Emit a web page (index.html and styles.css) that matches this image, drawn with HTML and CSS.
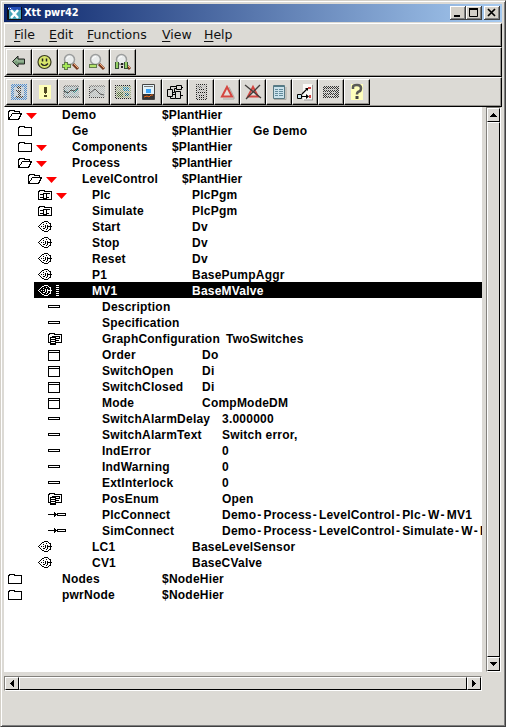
FILE: index.html
```html
<!DOCTYPE html>
<html lang="en">
<head>
<meta charset="utf-8">
<title>Xtt pwr42</title>
<link rel="stylesheet" href="styles.css">
</head>
<body>
<svg class="defs" width="0" height="0">
  <defs>
    <pattern id="check" width="2" height="2" patternUnits="userSpaceOnUse"><path d="M0 0h1v1h-1zM1 1h1v1h-1z" fill="#dcdad5"/></pattern>
    <symbol id="folder" viewBox="0 0 16 16"><path d="M.5 13.500V5.500L2.500 4.500H5.500L7.500 5.500H13.500V13.500Z"/></symbol>
    <symbol id="open" viewBox="0 0 16 16"><path d="M.5 13.500V5.500L2.500 4.500H5.500L7.500 5.500H11.500V7.500M.5 13.500L4.500 7.500H13.500L10.500 13.500Z"/></symbol>
    <symbol id="plc" viewBox="0 0 16 16"><path d="M.5 13.500V5.500L2.500 4.500H5.500L7.500 5.500H13.500V13.500ZM2 8.500H5M2 11.500H5M5.500 7.500H8.500V12.500H5.500ZM8 7.500H12M8 11.500H11"/></symbol>
    <symbol id="obj" viewBox="0 0 16 16"><path d="M.5 8.500L4.500 4.500L7 3.500H9.500L12.500 6V11L9.500 13.500H7L4.500 12.500L.5 8.500M12 8.500H14"/><path d="M3 8.500H12M5.500 6L8 8.500L5.500 11M8 5.500L11 8.500L8 11.500" stroke-dasharray="1 1"/></symbol>
    <symbol id="attr" viewBox="0 0 16 16"><path d="M.5 7.500H11.500V9.500H.5Z"/></symbol>
    <symbol id="box" viewBox="0 0 16 16"><path d="M.5 4.500H11.500V14.500H.5ZM0 6.500H12"/></symbol>
    <symbol id="enum" viewBox="0 0 16 16"><path d="M.5 12.500V4.500L2.500 3.500H5.500L7.500 4.500H13.500V12.500Z"/><path d="M4.500 6.500H11.500V8.500H4.500ZM8 10.500H11"/><path d="M2.500 7.500H7.500V14.500H2.500Z" fill="#fff"/><path d="M3 9.500H7M3 11.500H7M3 13.500H7"/></symbol>
    <symbol id="conn" viewBox="0 0 18 16"><path d="M0 8.500H9M6.500 6V11M7.500 7V10M9.500 7.500H17.500V9.500H9.500Z"/></symbol>
    <symbol id="lens" viewBox="0 0 24 24"><path d="M14 14L19 19" stroke="#763a20" stroke-width="3"/><path d="M15 14L19 18" stroke="#f4ad7e"/><circle cx="10.500" cy="9.500" r="5" fill="#e9ecec" stroke="#9b9d9d" stroke-width="1.500"/><path d="M7.500 9Q8 6.500 11 6.500" stroke="#fff" fill="none"/></symbol>
  </defs>
</svg>
<div class="window">
  <header class="titlebar">
    <svg class="logo" width="15" height="13"><path fill="#111" d="M0 0h15v13H0z"/><path fill="#2550b8" d="M1 0h13v3H1z"/><path fill="#45a4b8" d="M2 3h12v9H2z"/><path d="M4 3L11 11M11 3L4 11" stroke="#fff" stroke-width="2.500"/><path fill="#fff" d="M1 1h1v1H1zM3 1h1v1H3z"/></svg>
    <h1>Xtt pwr42</h1>
    <div class="controls">
      <button aria-label="Minimize"><svg width="14" height="12"><path fill="#000" d="M3 8h6v2H3z"/></svg></button>
      <button aria-label="Maximize"><svg width="14" height="12"><path d="M2.500 2v7.500h8V2" fill="none" stroke="#000"/><path d="M2 1h9v2H2z"/></svg></button>
      <button class="close" aria-label="Close"><svg width="14" height="12"><path d="M3 2L10 9M10 2L3 9" stroke="#000" stroke-width="1.700"/></svg></button>
    </div>
  </header>
  <nav class="menubar"><span class="m1"><u>F</u>ile</span><span class="m2"><u>E</u>dit</span><span class="m3"><u>F</u>unctions</span><span class="m4"><u>V</u>iew</span><span><u>H</u>elp</span></nav>
  <div class="toolbar">
    <button><svg viewBox="0 0 24 24"><path d="M5.500 11.500L11 6V9H17.500V14H11V17Z" fill="#789c79" stroke="#222"/><path d="M7 11.500L10 9v2h7" fill="none" stroke="#abc3aa"/></svg></button>
    <button><svg viewBox="0 0 24 24"><circle cx="11.500" cy="12" r="6.500" fill="#d8e66c" stroke="#383b20" stroke-width="1.200"/><path d="M9.500 8.500v3M13.500 8.500v3" stroke="#222" stroke-width="1.500"/><path d="M8 13.500Q11.500 17.500 15 13.500" fill="none" stroke="#222" stroke-width="1.200"/></svg></button>
    <button><svg viewBox="0 0 24 24"><use href="#lens"/><path d="M5 12h4v2h3v4H9v2H5v-2H3v-4h2z" fill="#617d4a"/><path d="M6 13h2v2h3v2H8v2H6v-2H4v-2h2z" fill="#a5e857"/></svg></button>
    <button><svg viewBox="0 0 24 24"><use href="#lens"/><path d="M4 14h8v4H4z" fill="#617d4a"/><path d="M5 15h6v2H5z" fill="#b3e26c"/></svg></button>
    <button><svg viewBox="0 0 24 24"><use href="#lens"/><path d="M4 12h4v7H4zM13 12h4v7h-4z" fill="#385134"/><path d="M5 12h2v6H5zM14 12h2v6h-2z" fill="#94cf65"/><path d="M10 13h2v2h-2zM10 16h2v2h-2z" fill="#222"/></svg></button>
  </div>
  <div class="toolbar">
    <button><svg viewBox="0 0 24 24"><path d="M4 4h16v16H4z" fill="#4c8dd3"/><path d="M7 7h10v10H7z" fill="#bed0e1"/><path d="M10 6h4v3h-4zM9 10h5v6h2v2H9v-2h2v-4H9z" fill="#444"/><path d="M4 4h16v16H4z" fill="url(#check)"/></svg></button>
    <button><svg viewBox="0 0 24 24"><path d="M6 5h12v14H6z" fill="#ffffb9"/><path d="M11 7h3v6h-1v1h-1v-1h-1zM11 15h3v2h-3z" fill="#514a23"/></svg></button>
    <button><svg viewBox="0 0 24 24"><path d="M5 6h15v12H5z" fill="#a4bac2"/><path d="M5 10l4 3 3-3 3 2 4-3" fill="none" stroke="#188" stroke-width="1.500"/><path d="M5 18V6h15M5 17h15v1" fill="none" stroke="#444"/><path d="M4 5h17v14H4z" fill="url(#check)"/><path d="M5 11l4 2 3-3 3 1 4-3" fill="none" stroke="#444"/></svg></button>
    <button><svg viewBox="0 0 24 24"><path d="M4 6h16v12H4z" fill="#bac2c3"/><path d="M4.500 18V6H20M4 17.500h16" fill="none" stroke="#444"/><path d="M4 5h17v14H4z" fill="url(#check)"/><path d="M5 13l5-4 5 5 4 1" fill="none" stroke="#555"/></svg></button>
    <button><svg viewBox="0 0 24 24"><path d="M4 5h16v14H4z" fill="#9dac86"/><path d="M4 5.500h16M4.500 5v13M4 18.500h16" stroke="#222"/><path d="M12 7h6v4h-6z" fill="#288eb0"/><path d="M6 12h6v5H6z" fill="#526f35"/><path d="M14 13h4v3h-4z" fill="#167"/><path d="M4 5h16v14H4z" fill="url(#check)"/></svg></button>
    <button><svg viewBox="0 0 24 24"><path d="M5.500 4.500h12v15h-12z" fill="#e3f3fa" stroke="#444"/><path d="M7 6h9v1H7z" fill="#777"/><path d="M9 9h5v4H9z" fill="#3aa5fa"/><path d="M6 14h11v5H6z" fill="#333"/><path d="M7 17l3-1 2 1 2-2h2" fill="none" stroke="#f36a19"/></svg></button>
    <button><svg viewBox="0 0 24 24"><path d="M4.500 9.500h5v7h-5zM12.500 11.500h5v7h-5zM13.500 5.500h5v4h-5zM9 14.500h4M7.500 9V6.500h6M10 12.500h1.500V8.500h2M17 15.500h3M18 7.500h2M7.500 16v2.500h5" fill="none" stroke="#000"/></svg></button>
    <button><svg viewBox="0 0 24 24"><path d="M7.500 4.500h10v15h-10z" fill="#bbb" stroke="#222"/><path d="M9 7h4M9 9.500h7M9 12.500h7M9 15.500h7M9 17.500h7" stroke="#111"/><path d="M7 4h11v16H7z" fill="url(#check)"/></svg></button>
    <button><svg viewBox="0 0 24 24"><path d="M8 19h11v-2L14 7" stroke="#aaa9a4" fill="none"/><path d="M12 7L17 16.500H7Z" fill="#e5dfda" stroke="#d44741" stroke-width="2"/></svg></button>
    <button><svg viewBox="0 0 24 24"><path d="M12 7L17 16.500H7Z" fill="#e5dfda" stroke="#d44741" stroke-width="2"/><path d="M4 5L20 18M19 5L5 19" stroke="#413d3b" stroke-width="1.300"/></svg></button>
    <button><svg viewBox="0 0 24 24"><path d="M7 19.500h12V7" fill="none" stroke="#aaa9a4"/><path d="M6.500 5.500h11v13h-11z" fill="#cbe2ec" stroke="#587983"/><path d="M7 6.500h10" stroke="#527c89"/><path d="M8 9.500h3M12 9.500h4M8 11.500h3M12 11.500h4M8 13.500h3M12 13.500h4M8 15.500h3M12 15.500h4" stroke="#638b9b"/></svg></button>
    <button><svg viewBox="0 0 24 24"><path d="M10 4h9v16h-9z" fill="#faf9f6"/><path d="M19.500 5v15M11 20h9" stroke="#999"/><path d="M4.500 14.500h4v4h-4z" fill="#c9e7ee" stroke="#000"/><path d="M9 14l5-5M9 16.500h6" stroke="#000" fill="none" stroke-width="1.200"/><path d="M12 8h3v3zM13 14l3 2.500-3 2.500z"/><path d="M15 7h3v2h-3zM16 15h2v3h-2z" fill="#d14140"/></svg></button>
    <button><svg viewBox="0 0 24 24"><path d="M4 6h16v12H4z" fill="#333"/><path d="M6 9.500h7M14 9.500h4M5 12.500h6M13 12.500h4M7 15.500h9" stroke="#bbb"/><path d="M4 6h16v12H4z" fill="url(#check)"/></svg></button>
    <button><svg viewBox="0 0 24 24"><path d="M6 4h12v16H6z" fill="#ffffbc"/><path d="M8 9V7q0-2 4-2t4 3-2 3.500-2 3" fill="none" stroke="#5a5a57" stroke-width="2.500"/><path d="M10.500 16h3v3h-3z" fill="#444"/></svg></button>
  </div>
  <main class="workspace">
    <ul class="tree">
      <li class="l0"><i><svg><use href="#open"/></svg><b></b></i><span>Demo</span><span class="hier">$PlantHier</span></li>
      <li class="l1"><i><svg><use href="#folder"/></svg></i><span>Ge</span><span class="type hier">$PlantHier</span><span>Ge Demo</span></li>
      <li class="l1"><i><svg><use href="#folder"/></svg><b></b></i><span>Components</span><span class="hier">$PlantHier</span></li>
      <li class="l1"><i><svg><use href="#open"/></svg><b></b></i><span>Process</span><span class="hier">$PlantHier</span></li>
      <li class="l2"><i><svg><use href="#open"/></svg><b></b></i><span>LevelControl</span><span class="hier">$PlantHier</span></li>
      <li class="l3"><i><svg><use href="#plc"/></svg><b></b></i><span>Plc</span><span>PlcPgm</span></li>
      <li class="l3"><i><svg><use href="#plc"/></svg></i><span>Simulate</span><span>PlcPgm</span></li>
      <li class="l3"><i><svg><use href="#obj"/></svg></i><span>Start</span><span>Dv</span></li>
      <li class="l3"><i><svg><use href="#obj"/></svg></i><span>Stop</span><span>Dv</span></li>
      <li class="l3"><i><svg><use href="#obj"/></svg></i><span>Reset</span><span>Dv</span></li>
      <li class="l3"><i><svg><use href="#obj"/></svg></i><span>P1</span><span>BasePumpAggr</span></li>
      <li class="l3 selected"><i><svg><use href="#obj"/></svg><em></em></i><span>MV1</span><span>BaseMValve</span></li>
      <li class="l4"><i><svg><use href="#attr"/></svg></i><span>Description</span></li>
      <li class="l4"><i><svg><use href="#attr"/></svg></i><span>Specification</span></li>
      <li class="l4 graph"><i><svg><use href="#enum"/></svg></i><span>GraphConfiguration</span><span>TwoSwitches</span></li>
      <li class="l4"><i><svg><use href="#box"/></svg></i><span>Order</span><span>Do</span></li>
      <li class="l4"><i><svg><use href="#box"/></svg></i><span>SwitchOpen</span><span>Di</span></li>
      <li class="l4"><i><svg><use href="#box"/></svg></i><span>SwitchClosed</span><span>Di</span></li>
      <li class="l4"><i><svg><use href="#box"/></svg></i><span>Mode</span><span>CompModeDM</span></li>
      <li class="l4 wide"><i><svg><use href="#attr"/></svg></i><span>SwitchAlarmDelay</span><span>3.000000</span></li>
      <li class="l4 wide"><i><svg><use href="#attr"/></svg></i><span>SwitchAlarmText</span><span>Switch error,</span></li>
      <li class="l4 wide"><i><svg><use href="#attr"/></svg></i><span>IndError</span><span>0</span></li>
      <li class="l4 wide"><i><svg><use href="#attr"/></svg></i><span>IndWarning</span><span>0</span></li>
      <li class="l4 wide"><i><svg><use href="#attr"/></svg></i><span>ExtInterlock</span><span>0</span></li>
      <li class="l4 wide"><i><svg><use href="#enum"/></svg></i><span>PosEnum</span><span>Open</span></li>
      <li class="l4 wide"><i><svg class="long"><use href="#conn"/></svg></i><span>PlcConnect</span><span class="path">Demo<s>-</s>Process<s>-</s>LevelControl<s>-</s>Plc<s>-</s>W<s>-</s>MV1</span></li>
      <li class="l4 wide"><i><svg class="long"><use href="#conn"/></svg></i><span>SimConnect</span><span class="path">Demo<s>-</s>Process<s>-</s>LevelControl<s>-</s>Simulate<s>-</s>W<s>-</s>MV1</span></li>
      <li class="l3"><i><svg><use href="#obj"/></svg></i><span>LC1</span><span>BaseLevelSensor</span></li>
      <li class="l3"><i><svg><use href="#obj"/></svg></i><span>CV1</span><span>BaseCValve</span></li>
      <li class="l0"><i><svg><use href="#folder"/></svg></i><span>Nodes</span><span>$NodeHier</span></li>
      <li class="l0"><i><svg><use href="#folder"/></svg></i><span>pwrNode</span><span>$NodeHier</span></li>
    </ul>
    <div class="scroll vertical"><div class="cap"><svg width="7" height="4"><path d="M3 0h1v1h1v1h1v1h1v1H0V3h1V2h1V1h1z"/></svg></div><div class="thumb"></div><div class="cap"><svg width="7" height="4"><path d="M0 0h7v1H6v1H5v1H4v1H3V3H2V2H1V1H0z"/></svg></div></div>
    <div class="scroll horizontal"><div class="cap"><svg width="4" height="7"><path d="M0 3h1V2h1V1h1V0h1v7H3V6H2V5H1V4H0z"/></svg></div><div class="thumb"></div><div class="cap"><svg width="4" height="7"><path d="M0 0h1v1h1v1h1v1h1v1H3v1H2v1H1v1H0z"/></svg></div></div>
  </main>
</div>
</body>
</html>
```
FILE: styles.css
```css
* { box-sizing: border-box; }
body { margin: 0; width: 506px; height: 727px; overflow: hidden; }
.defs { display: block; }
.window {
  width: 506px; height: 727px; padding: 3px 3px 0;
  background: #dcdad5; border: 1px solid #d4d0c8; border-right-color: #404040; border-bottom-color: #404040;
  box-shadow: inset 1px 1px #fff, inset -1px -1px #808080;
}
.titlebar {
  display: flex; align-items: center; height: 18px; padding: 0 2px 0 3px;
  background: linear-gradient(90deg, #0a246a, #a6caf0); color: #fff;
}
.logo { margin-right: 2px; }
h1 { flex: 1; margin: 0; font: bold 11px/16px "DejaVu Sans Condensed", "DejaVu Sans", sans-serif; letter-spacing: -.1px; }
.controls { display: flex; }
.controls button {
  width: 16px; height: 14px; padding: 0; border: 0; background: #d4d0c8;
  box-shadow: inset -1px -1px #404040, inset 1px 1px #fff, inset -2px -2px #808080;
}
.controls svg { display: block; margin: 1px; }
.controls .close { margin-left: 2px; }
.menubar, .toolbar {
  display: flex; width: 498px; border: 1px solid; border-color: #fff #000 #000 #fff;
  box-shadow: inset -1px -1px #96948f;
}
.menubar {
  height: 24px; margin-top: 1px; padding: 3px 0 0 9px;
  font: 12.5px/15px "DejaVu Sans", sans-serif; color: #111;
}
.m1 { width: 35px; } .m2 { width: 38px; } .m3 { width: 75px; } .m4 { width: 42px; }
u { text-underline-offset: 2px; text-decoration-thickness: 1px; }
.toolbar { height: 30px; padding: 1px; }
.toolbar button {
  width: 26px; height: 26px; padding: 0; background: #dcdad5;
  border: 1px solid; border-color: #fff #000 #000 #fff; box-shadow: inset -1px -1px #96948f;
}
.toolbar button svg { display: block; width: 24px; height: 24px; }
.workspace {
  display: grid; grid-template: 565px 15px / 478px 15px; gap: 4px; height: 619px; width: 498px; align-content: start;
}
.tree {
  margin: 0; padding: 0; list-style: none; background: #fff; overflow: hidden;
  font: bold 12px/18px "Liberation Sans", sans-serif; letter-spacing: .22px; color: #000;
}
.tree li { display: flex; height: 16px; padding-left: 4px; white-space: nowrap; }
.tree li:first-child { margin-top: -1px; }
.tree .l1 { margin-left: 10px; }
.tree .l2 { margin-left: 20px; }
.tree .l3 { margin-left: 30px; }
.tree .l4 { margin-left: 40px; }
.tree i { display: flex; flex: 0 0 54px; }
.tree i svg {
  width: 16px; height: 16px; fill: none; stroke: currentColor; shape-rendering: crispEdges;
}
.tree i svg.long { width: 18px; }
.tree b { width: 11px; height: 6px; margin: 7px 0 0 2px; background: #f00; clip-path: polygon(0 0, 100% 0, 50% 100%); }
.tree em { width: 3px; height: 11px; margin: 3px 0 0 2px; background: repeating-linear-gradient(#fff 0 1px, #000 1px 2px); }
.tree i + span { flex: 0 0 100px; }
.tree .wide i + span { flex-basis: 120px; }
.tree .graph i + span { flex-basis: 124px; }
.hier { letter-spacing: .1px; }
.type { width: 81px; }
.path s { text-decoration: none; margin: 0 2px 0 1px; }
.selected { background: #000; color: #fff; }
.scroll {
  display: flex; background: #dcdad5; border: 1px solid; border-color: #82807b #fff #fff #82807b;
}
.vertical { flex-direction: column; }
.cap, .thumb { border: 1px solid; border-color: #fff #000 #000 #fff; }
.cap { display: grid; place-items: center; flex: 0 0 14px; }
.thumb { flex: 1; }
```
